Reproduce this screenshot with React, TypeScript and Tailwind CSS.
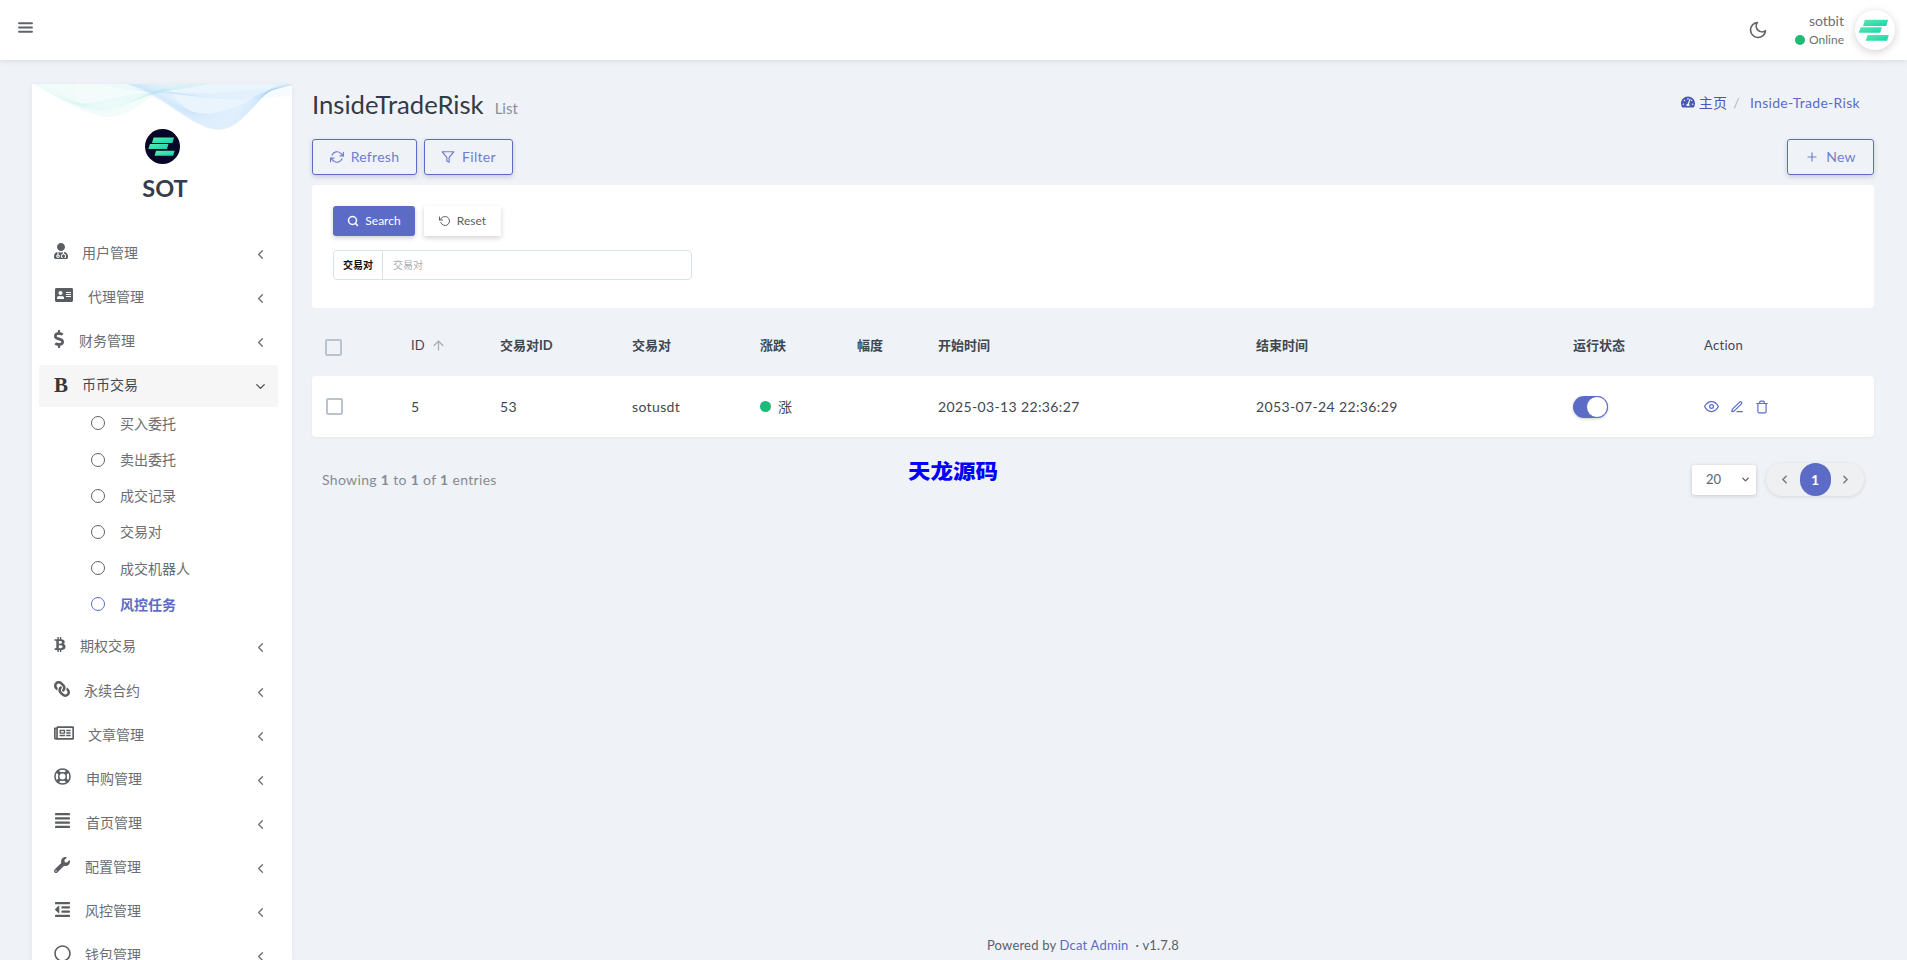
import React from 'react';
import {
  FaUserMd, FaAddressCard, FaDollarSign, FaBtc, FaLink, FaRegNewspaper,
  FaAlignJustify, FaWrench, FaOutdent, FaRegCircle, FaTachometerAlt,
} from 'react-icons/fa';
import {
  FiMenu, FiMoon, FiRefreshCw, FiFilter, FiPlus, FiSearch, FiRotateCcw, FiEye, FiEdit3, FiTrash,
  FiChevronLeft, FiChevronRight, FiChevronDown, FiArrowUp,
} from 'react-icons/fi';

const sans = "font-['Lato','Noto_Sans_CJK_SC',sans-serif]";

const Logo = ({ className, disc }: { className: string; disc?: boolean }) => (
  <svg className={className} viewBox="0 0 35 35">
    <defs>
      <linearGradient id="sotbar" x1="0" y1="0" x2="1" y2="1">
        <stop offset="0" stopColor="#5eeaa8" />
        <stop offset="1" stopColor="#14d3b4" />
      </linearGradient>
    </defs>
    {disc && <circle cx="17.5" cy="17.5" r="17.5" fill="#060627" />}
    <path d="M8.6 8.5H29L27.4 14H7z" fill="url(#sotbar)" />
    <path d="M5 15h18.5L22 20H3.3z" fill="url(#sotbar)" />
    <path d="M11 21.8h18.6l-1.5 5H9.5z" fill="url(#sotbar)" />
  </svg>
);

const Lifebuoy = ({ className }: { className?: string }) => (
  <svg className={className} viewBox="0 0 18 18" fill="none">
    <circle cx="9" cy="9" r="8" stroke="currentColor" strokeWidth="1.6" />
    <circle cx="9" cy="9" r="4" stroke="currentColor" strokeWidth="1.6" />
    <path d="M3.6 3.6l2.6 2.6M14.4 3.6l-2.6 2.6M3.6 14.4l2.6-2.6M14.4 14.4l-2.6-2.6" stroke="currentColor" strokeWidth="3.2" />
  </svg>
);

// thin overlapping curves at the top of the sidebar
const Waves = () => (
  <svg className="block w-full h-[48px]" viewBox="0 0 260 48" preserveAspectRatio="none" fill="none">
    <path d="M2 0C30 16 55 33 78 33S110 12 150 0z" fill="#e2f8f4" fillOpacity="0.4" />
    <path d="M95 0C130 12 165 46 187 46S225 14 246 0z" fill="#d6eafc" fillOpacity="0.5" />
    {Array.from({ length: 14 }).map((_, i) => (
      <path key={`a${i}`} d={`M${2 + i * 3} 0C${30 + i} ${16 + i}, ${60 - i} ${33 - i}, ${85 + i} ${24 - i}S${110 + i * 2} ${8}, ${150 + i * 2} 0`} stroke="#a9ece2" strokeOpacity="0.18" strokeWidth="0.5" />
    ))}
    {Array.from({ length: 20 }).map((_, i) => (
      <path key={`b${i}`} d={`M${95 + i * 2} 0C${130 + i} ${6 + i}, ${160} ${46 - i / 2}, ${186 + i / 2} ${45 - i}S${225 - i} ${12}, ${246 + i} 0`} stroke="#86c2f6" strokeOpacity="0.2" strokeWidth="0.5" />
    ))}
    {Array.from({ length: 10 }).map((_, i) => (
      <path key={`c${i}`} d={`M${70 + i * 5} 0C${110 + i * 3} ${10 - i / 2}, ${170} ${14 + i}, ${260} ${2 + i}`} stroke="#a9d6fa" strokeOpacity="0.18" strokeWidth="0.5" />
    ))}
  </svg>
);

const topMenu = [
  { label: '用户管理', Icon: FaUserMd, size: 'w-[14px] h-[16px]', box: 'w-[28px]' },
  { label: '代理管理', Icon: FaAddressCard, size: 'w-[20px] h-[16px]', box: 'w-[34px]' },
  { label: '财务管理', Icon: FaDollarSign, size: 'w-[10px] h-[18px]', box: 'w-[25px]' },
];

const subMenu = ['买入委托', '卖出委托', '成交记录', '交易对', '成交机器人'];

const bottomMenu = [
  { label: '期权交易', Icon: FaBtc, size: 'w-[12px] h-[15px]', box: 'w-[26px]' },
  { label: '永续合约', Icon: FaLink, size: 'w-[16px] h-[16px] -scale-x-100', box: 'w-[30px]' },
  { label: '文章管理', Icon: FaRegNewspaper, size: 'w-[20px] h-[18px]', box: 'w-[34px]' },
  { label: '申购管理', Icon: Lifebuoy, size: 'w-[17px] h-[17px]', box: 'w-[32px]' },
  { label: '首页管理', Icon: FaAlignJustify, size: 'w-[17px] h-[17px]', box: 'w-[32px]' },
  { label: '配置管理', Icon: FaWrench, size: 'w-[16px] h-[16px]', box: 'w-[31px]' },
  { label: '风控管理', Icon: FaOutdent, size: 'w-[17px] h-[17px]', box: 'w-[31px]' },
  { label: '钱包管理', Icon: FaRegCircle, size: 'w-[17px] h-[17px]', box: 'w-[31px]' },
];

type Item = { label: string; Icon: React.ComponentType<{ className?: string }>; size: string; box: string };

const MenuRow = ({ item }: { item: Item }) => (
  <div className="flex items-center h-[44.1px] pl-[15px] pr-[10px] ml-[7px] mr-[14px] text-[14px] text-[#6a6d72]">
    <span className={`${item.box} shrink-0 -mt-[4px]`}>
      <item.Icon className={`${item.size} text-[#5a5d61]`} />
    </span>
    <span className="flex-1 -mt-[1px]">{item.label}</span>
    <FiChevronLeft className="w-[15px] h-[15px] mt-[3px] text-[#6a6d72]" />
  </div>
);

const Sidebar = () => (
  <aside className="w-[260px] ml-[32px] mt-[24px] bg-white shadow-[0_1px_6px_rgba(0,0,0,0.06)] overflow-hidden shrink-0">
    <Waves />
    <div className="flex flex-col items-center -mt-[3px]">
      <Logo disc className="w-[35px] h-[35px]" />
      <div className="mt-[9px] ml-[6px] text-[23.5px] leading-[30px] font-bold text-[#333d4b]">SOT</div>
    </div>
    <nav className="mt-[28px]">
      {topMenu.map((m) => <MenuRow key={m.label} item={m} />)}
      <div className="flex items-center h-[42px] mt-[2px] pl-[15px] pr-[10px] ml-[7px] mr-[14px] bg-[#f6f6f7] rounded-[3px] text-[14px] text-[#43474d]">
        <span className="w-[28px] shrink-0 -mt-[3px] font-['Liberation_Serif',serif] font-bold text-[21px] leading-[24px] text-[#33373c]">B</span>
        <span className="flex-1 -mt-[3px]">币币交易</span>
        <FiChevronDown className="w-[15px] h-[15px] mt-[1px]" />
      </div>
      <ul className="-mt-[2px]">
        {subMenu.map((s) => (
          <li key={s} className="flex items-center h-[36.2px] pl-[59px] text-[14px] text-[#6a6d72]">
            <span className="w-[14px] h-[14px] rounded-full border-[1.5px] border-[#5f6368] mr-[15px]" />
            {s}
          </li>
        ))}
        <li className="flex items-center h-[36.2px] pl-[59px] text-[14px] font-bold text-[#5c6bc6]">
          <span className="w-[14px] h-[14px] rounded-full border-[1.5px] border-[#5c6bc6] mr-[15px]" />
          风控任务
        </li>
      </ul>
      <div className="pt-[2px]">
        {bottomMenu.map((m) => <MenuRow key={m.label} item={m} />)}
      </div>
    </nav>
  </aside>
);

const OutlineBtn = ({ icon, label, className }: { icon: React.ReactNode; label: string; className: string }) => (
  <button className={`${className} h-[36px] flex items-center justify-center gap-[7px] border border-[#5c6bc6] rounded-[3px] text-[14px] tracking-[0.3px] text-[#6f7dcf] shadow-[0_2px_5px_rgba(60,70,110,0.22)]`}>
    {icon}
    <span className="-mt-[2px]">{label}</span>
  </button>
);

const cols = 'grid grid-cols-[99px_89px_132px_128px_97px_81px_318px_317px_131px_1fr] items-center';

const Checkbox = ({ className }: { className?: string }) => (
  <span className={`block w-[17px] h-[17px] border-2 border-[#b9c3cd] rounded-[2px] ${className ?? ''}`} />
);

const headers = ['交易对ID', '交易对', '涨跌', '幅度', '开始时间', '结束时间', '运行状态'];

export default function App() {
  return (
    <div className={`${sans} h-screen overflow-hidden flex flex-col bg-[#eff3f8] text-[#414750] relative`}>
      <header className="h-[60px] shrink-0 bg-white shadow-[0_1px_6px_rgba(0,0,0,0.1)] flex items-center pl-[17px] pr-[12px] relative z-10">
        <FiMenu className="w-[17px] h-[17px] text-[#5f6368] -mt-[5px]" strokeWidth={3} />
        <div className="flex-1" />
        <FiMoon className="w-[20px] h-[20px] text-[#5f6368] mr-[27px]" />
        <div className="flex flex-col items-end mr-[11px] -mt-[1px]">
          <span className="text-[14px] leading-[18px] text-[#6b6f75]">sotbit</span>
          <span className="flex items-center text-[12px] leading-[16px] mt-[2px] text-[#6b6f75]">
            <span className="w-[10px] h-[10px] rounded-full bg-[#21b978] mr-[4px]" />Online
          </span>
        </div>
        <span className="w-[40px] h-[40px] rounded-full bg-white shadow-[0_2px_8px_rgba(0,0,0,0.18)] flex items-center justify-center">
          <Logo className="w-[40px] h-[40px]" />
        </span>
      </header>

      <div className="flex-1 flex min-h-0">
        <Sidebar />
        <main className="flex-1 flex flex-col pl-[20px] pr-[33px] min-w-0">
          <div className="flex items-center justify-between h-[34px] mt-[27px] mb-[1px]">
            <div className="flex items-baseline">
              <h1 className="text-[25.7px] font-normal text-[#333a44]">InsideTradeRisk</h1>
              <span className="ml-[11px] text-[15px] text-[#8b8f96]">List</span>
            </div>
            <div className="flex items-center text-[14px] tracking-[0.3px] text-[#5c6bc6] pr-[14px] -mt-[4px]">
              <FaTachometerAlt className="w-[14px] h-[14px] mr-[4px] text-[#4858b5]" />
              <span className="text-[#4858b5]">主页</span>
              <span className="ml-[6px] mr-[8px] text-[#b3b7bd]">/</span>
              <span className="ml-[2px]">Inside-Trade-Risk</span>
            </div>
          </div>

          <div className="flex items-center mt-[17px]">
            <OutlineBtn className="w-[105px]" label="Refresh" icon={<FiRefreshCw className="w-[14px] h-[14px]" />} />
            <OutlineBtn className="w-[89px] ml-[7px]" label="Filter" icon={<FiFilter className="w-[14px] h-[14px]" />} />
            <div className="flex-1" />
            <OutlineBtn className="w-[87px]" label="New" icon={<FiPlus className="w-[14px] h-[14px]" />} />
          </div>

          <section className="h-[123px] mt-[10px] bg-white rounded-[4px] pt-[21px] pl-[21px]">
            <div className="flex items-center">
              <button className="w-[82px] h-[30px] bg-[#5c6bc6] text-white rounded-[3px] text-[12px] flex items-center justify-center gap-[6px] shadow-[0_2px_4px_rgba(60,70,110,0.25)]">
                <FiSearch className="w-[12px] h-[12px]" strokeWidth={3} />Search
              </button>
              <button className="w-[77px] h-[30px] ml-[9px] bg-white text-[#5a5f68] text-[12px] flex items-center justify-center gap-[6px] shadow-[0_2px_5px_rgba(0,0,0,0.18)]">
                <FiRotateCcw className="w-[12px] h-[12px]" />Reset
              </button>
            </div>
            <div className="flex w-[359px] h-[30px] mt-[14px] border border-[#dce3e8] rounded-[4px] text-[10px] items-stretch">
              <span className="w-[49px] border-r border-[#dce3e8] flex items-center justify-center font-bold text-[#111]">交易对</span>
              <span className="pl-[10px] flex items-center text-[#a9adb2]">交易对</span>
            </div>
          </section>

          <div className={`${cols} h-[68px] pt-[7px] text-[13px] font-bold text-[#414750]`}>
            <span className="pl-[13px]"><Checkbox className="mt-[3px]" /></span>
            <span className="flex items-center font-normal">ID<FiArrowUp className="ml-[6px] w-[15px] h-[15px] text-[#a4acb5]" /></span>
            {headers.map((h) => <span key={h}>{h}</span>)}
            <span className="font-normal tracking-[0.3px]">Action</span>
          </div>

          <div className={`${cols} h-[61px] bg-white rounded-[4px] text-[14px] tracking-[0.37px] shadow-[0_1px_3px_rgba(0,0,0,0.05)]`}>
            <span className="pl-[14px]"><Checkbox /></span>
            <span className="-mt-[1px]">5</span>
            <span className="-mt-[1px]">53</span>
            <span className="-mt-[1px]">sotusdt</span>
            <span className="flex items-center -mt-[1px]">
              <span className="w-[11px] h-[11px] rounded-full bg-[#21b978] mr-[7px]" />涨
            </span>
            <span />
            <span className="-mt-[1px]">2025-03-13 22:36:27</span>
            <span className="-mt-[1px]">2053-07-24 22:36:29</span>
            <span className="block w-[35px] h-[22px] rounded-full bg-[#5c6bc6] relative shadow-[0_1px_3px_rgba(0,0,0,0.2)]">
              <span className="absolute right-0 top-0 w-[22px] h-[22px] rounded-full bg-white border border-[#5c6bc6]" />
            </span>
            <span className="flex items-center text-[#5c6bc6]">
              <FiEye className="w-[15px] h-[15px]" />
              <FiEdit3 className="w-[14px] h-[14px] ml-[11px]" />
              <FiTrash className="w-[14px] h-[14px] ml-[11px]" />
            </span>
          </div>

          <div className="flex items-center mt-[26px] pl-[10px] pr-[10px]">
            <span className="text-[14px] tracking-[0.33px] text-[#858a92]">
              Showing <b>1</b> to <b>1</b> of <b>1</b> entries
            </span>
            <div className="flex-1" />
            <div className="w-[64px] h-[30px] bg-white rounded-[3px] flex items-center justify-between pl-[14px] pr-[5px] text-[13px] text-[#5f636a] shadow-[0_1px_4px_rgba(0,0,0,0.18)]">
              20<FiChevronDown className="w-[11px] h-[11px]" strokeWidth={3} />
            </div>
            <div className="ml-[10px] w-[98px] h-[33px] rounded-full bg-[#eff0f1] flex items-center justify-between shadow-[0_1px_4px_rgba(0,0,0,0.12)] relative">
              <FiChevronLeft className="w-[13px] h-[13px] ml-[12px] text-[#7b7f85]" strokeWidth={3} />
              <span className="w-[31px] h-[33px] rounded-full bg-[#5c6bc6] text-white text-[14px] font-bold flex items-center justify-center">1</span>
              <FiChevronRight className="w-[13px] h-[13px] mr-[12px] text-[#7b7f85]" strokeWidth={3} />
            </div>
          </div>

          <div className="flex-1" />
          <footer className="h-[30px] pr-[20px] text-center text-[13px] tracking-[0.2px] text-[#5a5f68] leading-[30px]">
            Powered by <span className="text-[#5c6bc6]">Dcat Admin</span> &nbsp;·&nbsp;v1.7.8
          </footer>
        </main>
      </div>

      <div className="absolute left-[908px] top-[456px] text-[22.5px] leading-[28px] font-black scale-y-90 text-[#0000ff] font-['Noto_Sans_CJK_SC',sans-serif]">天龙源码</div>
    </div>
  );
}
